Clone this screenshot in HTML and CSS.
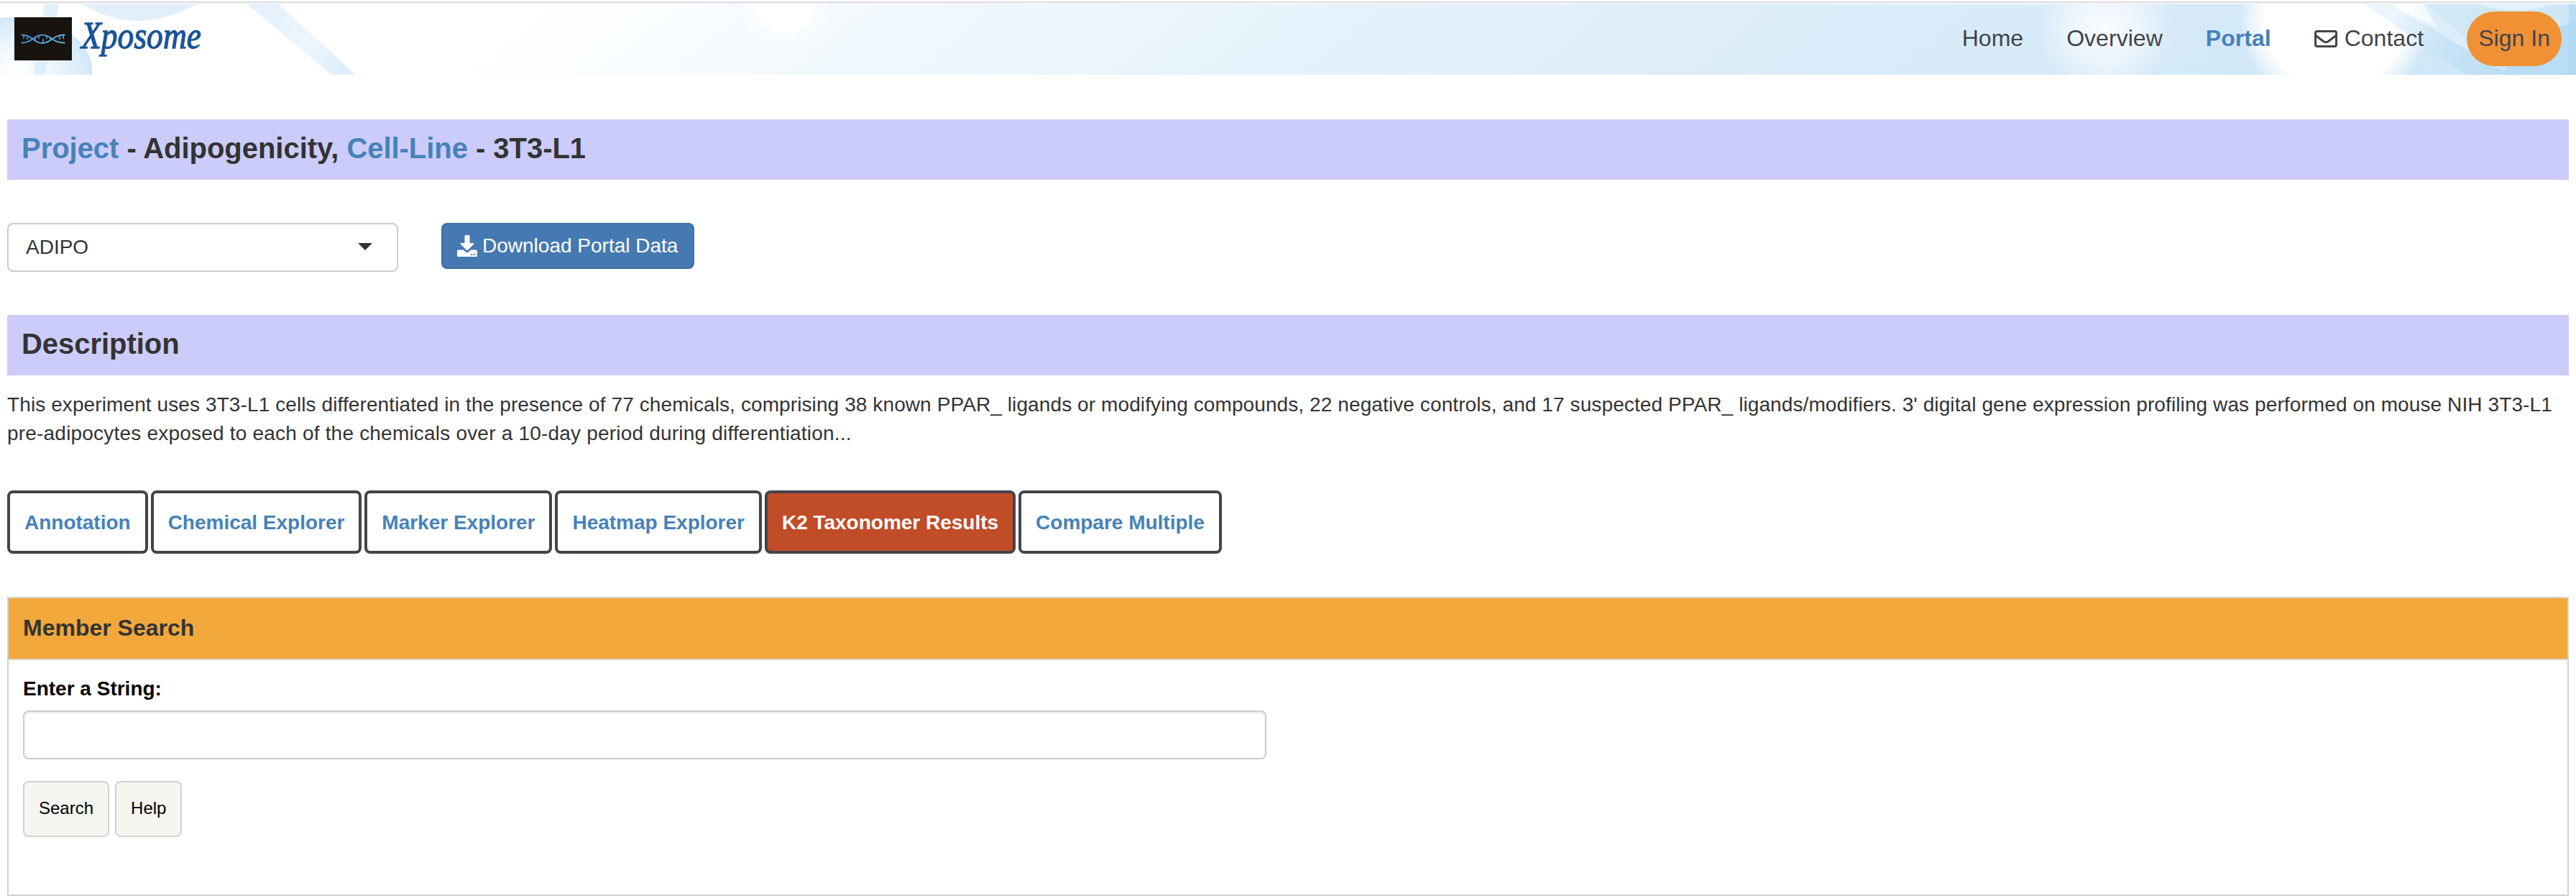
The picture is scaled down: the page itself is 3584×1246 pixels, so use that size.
FILE: index.html
```html
<!DOCTYPE html>
<html lang="en">
<head>
<meta charset="utf-8">
<title>Xposome</title>
<link rel="stylesheet" href="styles.css">
</head>
<body>
<header class="header">
  <svg class="header-art" viewBox="0 0 3584 98" preserveAspectRatio="none" aria-hidden="true">
    <defs>
      <linearGradient id="sky" x1="640" y1="0" x2="3584" y2="0" gradientUnits="userSpaceOnUse" gradientTransform="skewX(-50)">
        <stop offset="0" stop-color="#ffffff"/>
        <stop offset=".08" stop-color="#fcfeff"/>
        <stop offset=".2" stop-color="#f2f9fd"/>
        <stop offset=".42" stop-color="#e5f2fb"/>
        <stop offset=".65" stop-color="#dbecf9"/>
        <stop offset="1" stop-color="#cfe7f7"/>
      </linearGradient>
      <radialGradient id="glow"><stop offset="0" stop-color="#fff" stop-opacity=".9"/><stop offset=".6" stop-color="#fff" stop-opacity=".45"/><stop offset=".9" stop-color="#fff" stop-opacity=".15"/><stop offset="1" stop-color="#fff" stop-opacity="0"/></radialGradient>
      <radialGradient id="flare"><stop offset="0" stop-color="#fff"/><stop offset=".74" stop-color="#fff"/><stop offset=".92" stop-color="#fff" stop-opacity=".35"/><stop offset="1" stop-color="#fff" stop-opacity="0"/></radialGradient>
      <radialGradient id="ball"><stop offset="0" stop-color="#fff"/><stop offset=".35" stop-color="#f3f9fe"/><stop offset=".8" stop-color="#dceefa"/><stop offset=".96" stop-color="#d4eafa"/><stop offset="1" stop-color="#c8e4f8"/></radialGradient>
      <linearGradient id="rod" x1="350" y1="0" x2="480" y2="98" gradientUnits="userSpaceOnUse"><stop offset="0" stop-color="#e2f0fb"/><stop offset=".6" stop-color="#ecf6fd"/><stop offset="1" stop-color="#dceefa"/></linearGradient>
      <linearGradient id="beam" x1="3340" y1="0" x2="3500" y2="98" gradientUnits="userSpaceOnUse"><stop offset="0" stop-color="#e4f2fb"/><stop offset=".5" stop-color="#c2e0f5"/><stop offset="1" stop-color="#b4dbf4"/></linearGradient>
    </defs>
    <rect width="3584" height="98" fill="url(#sky)"/>
    <path d="M0 24Q55 12 98 44Q126 70 129 98H0Z" fill="#d7ebfa"/>
    <ellipse cx="20" cy="92" rx="108" ry="74" fill="url(#ball)"/>
    <path d="M62 0H82L62 98H46Z" fill="#cde7f9" opacity=".6"/>
    <path d="M115 0Q190 46 273 0Z" fill="#e1effa"/>
    <path d="M344 0H388L495 98H461Z" fill="url(#rod)"/>
    <ellipse cx="1092" cy="8" rx="58" ry="50" fill="#fff" opacity=".4"/>
    <ellipse cx="1092" cy="4" rx="40" ry="38" fill="#fff"/>
    <ellipse cx="2930" cy="34" rx="92" ry="88" fill="url(#glow)"/>
    <ellipse cx="3248" cy="24" rx="132" ry="120" fill="url(#flare)"/>
    <path d="M3326 0H3376L3484 93Z" fill="#fff" opacity=".25"/>
    <path d="M3290 0L3326 0L3484 93L3500 98H3430Z" fill="url(#beam)" opacity=".75"/>
    <path d="M3328 0H3372L3392 34Z" fill="#fff" opacity=".6"/>
    <path d="M3484 93L3510 46L3584 24V98H3484Z" fill="#b4dbf4" opacity=".85"/>
    <path d="M3450 0Q3500 18 3550 0Z" fill="#e2f1fb"/>
    <rect x="3574" width="10" height="98" fill="#a8d7f4" opacity=".6"/>
  </svg>
  <a class="brand" href="#">
    <svg class="logo" viewBox="0 0 80 60" aria-hidden="true">
      <defs><linearGradient id="dna" x1="9" y1="0" x2="71" y2="0" gradientUnits="userSpaceOnUse"><stop offset="0" stop-color="#4391dc"/><stop offset="1" stop-color="#5bb6d4"/></linearGradient></defs>
      <rect width="80" height="60" fill="#18130f"/>
      <g fill="none" stroke="url(#dna)" stroke-width="1.9">
        <path d="M9.500 24.500C25 24 26 36 39 36S52 24.500 70.500 24.500M9.500 35.500C25 36 26 24.600 39 24.600S52 36 70.500 35.500"/>
        <path d="M13 25v5M18 26v5M29 27v5M34 25v5M40 36v-6M45 25v5M50 27v5M63 26v5M68 25v5" stroke-width="1.500"/>
      </g>
    </svg>
    <svg class="wordmark" viewBox="0 0 172 80"><text x="3" y="43" textLength="167" lengthAdjust="spacingAndGlyphs">Xposome</text></svg>
  </a>
  <nav class="nav">
    <a href="#">Home</a>
    <a href="#">Overview</a>
    <a class="current" href="#">Portal</a>
    <a href="#"><svg class="mail" viewBox="0 0 32 24" fill="none" stroke="currentColor" stroke-width="3"><rect x="1.500" y="1.500" width="29" height="21" rx="2.500"/><path d="M2 7.500L12.500 15.500Q16 17.800 19.500 15.500L30 7.500"/></svg>Contact</a>
    <a class="sign-in" href="#">Sign In</a>
  </nav>
</header>
<main class="page">
  <h3 class="bar"><a href="#">Project</a> - Adipogenicity, <a href="#">Cell-Line</a> - 3T3-L1</h3>
  <div class="controls">
    <div class="select"><span>ADIPO</span><i class="caret"></i></div>
    <button class="download"><svg viewBox="0 0 28 30" fill="currentColor"><path d="M10.500 1Q10.500 0 11.500 0H16.500Q17.500 0 17.500 1V11H22.500Q24 11.300 23 12.700L15 20.700Q14 21.500 13 20.700L5 12.700Q4 11.300 5.500 11H10.500Z"/><path fill-rule="evenodd" d="M1.500 20.500H9L12 23.400Q14 25 16 23.400L19 20.500H26.500Q28 20.500 28 22V28.500Q28 30 26.500 30H1.500Q0 30 0 28.500V22Q0 20.500 1.500 20.500ZM19.300 26v2h2v-2ZM23.200 26v2h2v-2Z"/></svg>Download Portal Data</button>
  </div>
  <h3 class="bar">Description</h3>
  <p class="description"><span class="first-line">This experiment uses 3T3-L1 cells differentiated in the presence of 77 chemicals, comprising 38 known PPAR_ ligands or modifying compounds, 22 negative controls, and 17 suspected PPAR_ ligands/modifiers. 3' digital gene expression profiling was performed on mouse NIH 3T3-L1</span><br><span class="last-line">pre-adipocytes exposed to each of the chemicals over a 10-day period during differentiation...</span></p>
  <div class="tabs">
    <a href="#">Annotation</a>
    <a href="#">Chemical Explorer</a>
    <a href="#">Marker Explorer</a>
    <a href="#">Heatmap Explorer</a>
    <a class="active" href="#">K2 Taxonomer Results</a>
    <a href="#">Compare Multiple</a>
  </div>
  <section class="panel">
    <h4 class="panel-title">Member Search</h4>
    <div class="panel-body">
      <label for="member">Enter a String:</label>
      <input id="member" type="text">
      <div class="actions"><button>Search</button><button>Help</button></div>
    </div>
  </section>
</main>
</body>
</html>
```
FILE: styles.css
```css
* { box-sizing: border-box; }
body { margin: 0; background: #fff; color: #333; font: 28px/40px "Liberation Sans", Arial, sans-serif; }
a { color: #4682b9; text-decoration: none; }
h3, h4, p { margin: 0; }
button { font-family: inherit; }

.header { position: relative; height: 104px; display: flex; justify-content: space-between; padding: 0 20px; }
.header::before { content: ""; position: absolute; left: 0; right: 0; top: 2px; height: 4px; background: linear-gradient(#dcdce4 50%, #f6f6f7 50%); }
.header-art { position: absolute; left: 0; top: 6px; width: 100%; height: 98px; }
.brand { position: relative; display: flex; align-items: flex-start; padding-top: 24px; gap: 10px; }
.logo { width: 80px; height: 60px; }
.wordmark { width: 172px; height: 80px; overflow: visible; }
.wordmark text { font: italic 52px "Liberation Serif", serif; fill: #1b5497; stroke: #1b5497; stroke-width: 1.3px; }
.nav { position: relative; display: flex; gap: 60px; padding-top: 16px; font-size: 32px; line-height: 74px; }
.nav a { color: #41444b; height: 76px; display: flex; align-items: center; padding-bottom: 2px; letter-spacing: .03px; }
.nav .current { color: #4682b9; font-weight: bold; }
.nav .sign-in { background: #f19135; border-radius: 38px; padding: 0 16px 2px; }
.mail { width: 32px; height: 24px; margin: 2px 10px 0 0; }

.page { padding: 62px 10px 0; }
.bar { height: 84px; padding: 0 20px; background: #ccccfb; font-size: 40px; line-height: 80px; letter-spacing: -.04px; }
.controls { display: flex; align-items: flex-start; gap: 60px; padding: 60px 0; height: 188px; }
.select { width: 544px; height: 68px; display: flex; align-items: center; justify-content: space-between; padding: 0 34px 0 24px; border: 2px solid #ccc; border-radius: 8px; }
.caret { width: 20px; height: 10px; margin-top: -2px; background: #333; clip-path: polygon(0 0, 100% 0, 50% 100%); }
.download { width: 352px; height: 64px; display: flex; align-items: center; gap: 7px; padding: 0 0 0 20px; border: 2px solid #3f6fa6; border-radius: 8px; background: #4579b2; color: #fff; font-size: 28px; white-space: nowrap; }
.download svg { width: 28px; height: 30px; }
.description { padding-top: 21px; height: 160px; white-space: nowrap; }
.first-line { letter-spacing: .1px; }
.last-line { letter-spacing: .2px; }
.tabs { display: flex; gap: 4px; height: 88px; }
.tabs a { padding: 0 20px; border: 4px solid #41444b; border-radius: 8px; font-weight: bold; line-height: 81px; white-space: nowrap; letter-spacing: -.01px; }
.tabs .active { background: #c04c28; color: #fff; }
.panel { margin-top: 60px; height: 416px; border: 2px solid #d2d2d2; }
.panel-title { height: 86px; padding-left: 20px; border-bottom: 2px solid #d2d2d2; background: #f2a83b; font-size: 32px; line-height: 82px; }
.panel-body { padding: 20px; display: flex; flex-direction: column; align-items: flex-start; color: #000; }
label { font-weight: bold; line-height: 40px; margin-bottom: 10px; }
input { width: 1730px; height: 68px; border: 2px solid #ccc; border-radius: 8px; background: #fff; box-shadow: inset 0 2px 2px rgba(0, 0, 0, .075); }
.actions { display: flex; gap: 8px; margin-top: 30px; }
.actions button { height: 78px; padding: 0 20px 3px; border: 2px solid #d2d2d2; border-radius: 8px; background: #f6f5f0; color: #000; font-size: 24px; }
```
